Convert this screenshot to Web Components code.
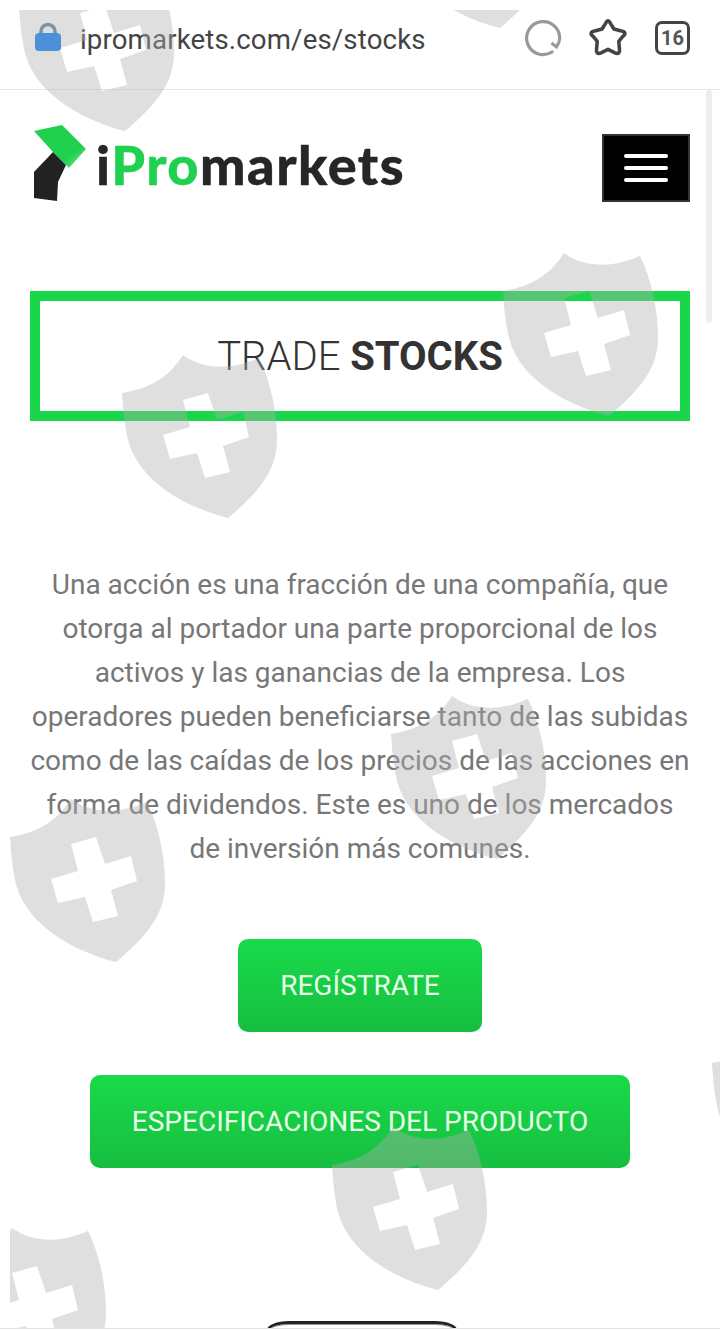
<!DOCTYPE html>
<html lang="es">
<head>
<meta charset="UTF-8">
<title>iPromarkets</title>
<style>
  html, body { margin: 0; padding: 0; background: #fff; }
  body { width: 720px; height: 1331px; overflow: hidden; position: relative; font-family: Roboto, sans-serif; }
</style>
</head>
<body>
<browser-bar url="ipromarkets.com/es/stocks" tabs="16"></browser-bar>
<site-page>
  <site-header></site-header>
  <title-box>TRADE <b>STOCKS</b></title-box>
  <intro-text>Una acción es una fracción de una compañía, que<br>otorga al portador una parte proporcional de los<br>activos y las ganancias de la empresa. Los<br>operadores pueden beneficiarse tanto de las subidas<br>como de las caídas de los precios de las acciones en<br>forma de dividendos. Este es uno de los mercados<br>de inversión más comunes.</intro-text>
  <green-button style="width:244px;margin-top:68px">REGÍSTRATE</green-button>
  <green-button style="width:540px;margin-top:43px">ESPECIFICACIONES DEL PRODUCTO</green-button>
  <phone-top></phone-top>
</site-page>
<water-marks></water-marks>

<script>
class BrowserBar extends HTMLElement {
  constructor() {
    super();
    const url = this.getAttribute('url');
    const tabs = this.getAttribute('tabs');
    this.attachShadow({ mode: 'open' }).innerHTML = `
      <style>
        :host { display: flex; align-items: center; height: 90px; box-sizing: border-box; border-bottom: 1px solid #e6e6e6; padding: 0 30px 14px 34px; font-family: Roboto, sans-serif; }
        svg { flex: none; }
        .lock { width: 28px; height: 30px; margin-top: -1px; }
        .url { margin-left: 18px; margin-top: 3px; font-size: 27.6px; color: #444; flex: 1; letter-spacing: .15px; }
        .spin { width: 38px; height: 38px; margin-right: 26px; }
        .star { width: 40px; height: 40px; margin-right: 27px; }
        .tabs { width: 35px; height: 34px; box-sizing: border-box; border: 3.5px solid #444; border-radius: 7px; display: flex; align-items: center; justify-content: center; font-size: 20px; font-weight: 700; color: #555; }
      </style>
      <svg class="lock" viewBox="0 0 28 30"><path d="M7 13V9.500a7 7 0 0 1 14 0V13" fill="none" stroke="#5483ac" stroke-width="3.500"/><rect x="1" y="11" width="26" height="18" rx="4" fill="#0a7cf5"/></svg>
      <span class="url">${url}</span>
      <svg class="spin" viewBox="0 0 38 38"><path d="M28 33A16.500 16.500 0 1 1 35.500 21" fill="none" stroke="#999" stroke-width="3.200" stroke-linecap="round"/><path d="M27.500 24L32.500 28 35.500 22" fill="none" stroke="#999" stroke-width="3"/></svg>
      <svg class="star" viewBox="1.500 1.500 37 37"><path d="M17.800 6.500Q20 1.500 22.200 6.500L25.500 11.700 31.500 13.300Q38.500 14.500 33.700 18.600L30 23.200 30.500 29.500Q31.500 36 26 33.500L20 30.500 14 33.500Q8.500 36 9.500 29.500L10 23.200 6.300 18.600Q1.500 14.500 8.500 13.300L14.500 11.700z" fill="none" stroke="#444" stroke-width="3.300" stroke-linejoin="round"/></svg>
      <span class="tabs">${tabs}</span>`;
  }
}

class SitePage extends HTMLElement {
  constructor() {
    super();
    this.attachShadow({ mode: 'open' }).innerHTML = `
      <style>
        :host { display: flex; flex-direction: column; align-items: center; position: relative; height: 1238px; box-sizing: border-box; }
        .scroll { position: absolute; left: 706px; top: 0; width: 6px; height: 233px; background: #eee; border-radius: 3px; }
      </style>
      <div class="scroll"></div>
      <slot></slot>`;
  }
}

class SiteHeader extends HTMLElement {
  constructor() {
    super();
    this.attachShadow({ mode: 'open' }).innerHTML = `
      <style>
        :host { display: flex; justify-content: space-between; align-items: flex-end; width: 660px; height: 112px; font-family: Lato, sans-serif; }
        .logo { display: flex; align-items: flex-end; filter: blur(.5px); margin-left: 3px; }
        .mark { width: 56px; height: 78px; }
        .word { font-size: 54px; font-weight: 900; color: #262626; margin-left: 7px; margin-bottom: 10px; letter-spacing: 1.5px; line-height: 1; -webkit-text-stroke: .4px currentColor; }
        .word i { font-style: normal; color: #1fd14e; }
        .menu { width: 88px; height: 68px; box-sizing: border-box; background: #000; border: 2px solid #333; display: flex; flex-direction: column; justify-content: center; align-items: center; gap: 8px; }
        .menu span { width: 44px; height: 4px; background: #fff; border-radius: 2px; }
      </style>
      <div class="logo">
        <svg class="mark" viewBox="0 0 56 78"><defs><linearGradient id="g" x1="0" y1="0" x2="1" y2="1"><stop offset=".7" stop-color="#1fd14e"/><stop offset="1" stop-color="#7be69a"/></linearGradient></defs><path d="M1 7L29 1 53 25 36 44 20 28z" fill="url(#g)"/><path d="M20 28L33 41 25 58 24 77 1 74V48z" fill="#222"/></svg>
        <span class="word">i<i>Pro</i>markets</span>
      </div>
      <div class="menu"><span></span><span></span><span></span></div>`;
  }
}

class TitleBox extends HTMLElement {
  constructor() {
    super();
    this.attachShadow({ mode: 'open' }).innerHTML = `
      <style>
        :host { display: flex; align-items: center; justify-content: center; width: 660px; height: 130px; box-sizing: border-box; border: 10px solid #19d64a; margin-top: 89px; font-size: 40px; font-weight: 300; color: #333; font-family: Roboto, sans-serif; }
        ::slotted(b) { font-weight: 700; }
      </style>
      <div><slot></slot></div>`;
  }
}

class IntroText extends HTMLElement {
  constructor() {
    super();
    this.attachShadow({ mode: 'open' }).innerHTML = `
      <style>
        :host { display: block; width: 680px; margin-top: 142px; text-align: center; font-family: Roboto, sans-serif; font-size: 28px; line-height: 44px; color: #777; }
      </style>
      <slot></slot>`;
  }
}

class GreenButton extends HTMLElement {
  constructor() {
    super();
    this.attachShadow({ mode: 'open' }).innerHTML = `
      <style>
        :host { display: flex; align-items: center; justify-content: center; height: 93px; box-sizing: border-box; border-radius: 10px; background: linear-gradient(#19da4a, #17be40); color: #e6ffe8; font-family: Roboto, sans-serif; font-size: 28px; }
      </style>
      <slot></slot>`;
  }
}

class PhoneTop extends HTMLElement {
  constructor() {
    super();
    this.attachShadow({ mode: 'open' }).innerHTML = `
      <style>
        :host { position: absolute; left: 267px; top: 1231px; width: 190px; height: 7px; overflow: hidden; }
        div { width: 190px; height: 40px; box-sizing: border-box; border: 3px solid #222; border-radius: 22px / 9px; background: #fff; box-shadow: inset 0 1px #999; }
      </style>
      <div></div>`;
  }
}

class WaterMarks extends HTMLElement {
  constructor() {
    super();
    const spots = [[19,-32],[394,-135],[503,253],[122,355],[391,696],[10,799],[712,1025],[332,1127],[-49,1228]];
    const shield = 'M0 38C25 34 46 24 61 0C80 14 108 16 137 3C148 25 155 55 155 85C155 115 137 137 106 163C70 154 18 130 6 85C2 68 1 52 0 38Z' +
      'M61 45L86 38L95 65L121 57L127 82L101 91L108 117L83 123L75 98L48 104L41 80L68 72Z';
    const uses = spots.map(([x, y]) => `<path transform="translate(${x - 10} ${y - 10})" d="${shield}" fill-rule="evenodd"/>`).join('');
    this.attachShadow({ mode: 'open' }).innerHTML = `
      <style>
        :host { position: absolute; left: 10px; top: 10px; width: 710px; height: 1318px; overflow: hidden; pointer-events: none; }
        svg { display: block; }
        path { fill: rgba(175,175,175,.4); }
      </style>
      <svg width="710" height="1318">${uses}</svg>`;
  }
}

customElements.define('browser-bar', BrowserBar);
customElements.define('site-page', SitePage);
customElements.define('site-header', SiteHeader);
customElements.define('title-box', TitleBox);
customElements.define('intro-text', IntroText);
customElements.define('green-button', GreenButton);
customElements.define('phone-top', PhoneTop);
customElements.define('water-marks', WaterMarks);
</script>
<div style="height:1px;background:#e3e3e3;position:absolute;left:0;top:1328px;width:720px"></div>
</body>
</html>
